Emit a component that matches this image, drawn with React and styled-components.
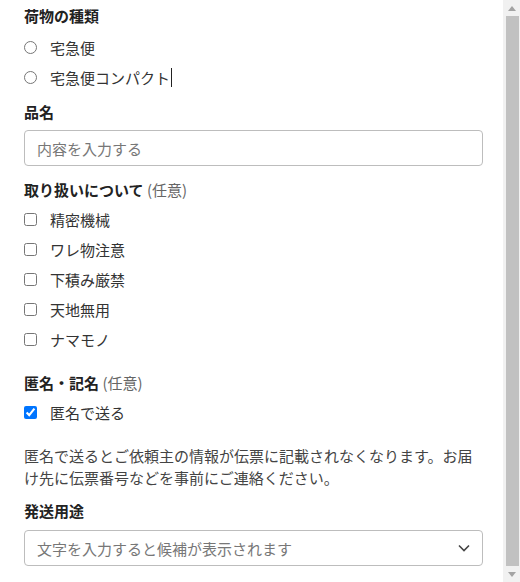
import React from "react";
import styled, { createGlobalStyle } from "styled-components";

const GlobalStyle = createGlobalStyle`
  html, body {
    margin: 0;
    padding: 0;
    background: #fff;
  }
  body {
    font-family: "Noto Sans CJK JP", "Noto Sans", sans-serif;
    color: #333;
  }
`;

const Page = styled.div`
  display: flex;
  height: 582px;
  overflow: hidden;
`;

const Form = styled.div`
  flex: 1;
  min-width: 0;
  padding: 5px 20px 0 24px;
`;

const Scrollbar = styled.div`
  flex: none;
  width: 17px;
  background: #f1f1f1;
  display: flex;
  flex-direction: column;
  align-items: center;
`;

const Arrow = styled.div`
  height: 16px;
  display: flex;
  align-items: center;
  justify-content: center;
`;

const Thumb = styled.div`
  flex: 1;
  width: 13px;
  margin-left: 1px;
  background: #c1c1c1;
`;

const Section = styled.div`
  margin-bottom: ${(p) => p.gap || 13}px;
`;

const Heading = styled.div`
  font-size: 15px;
  font-weight: bold;
  line-height: 22px;
  color: #222;
  margin-bottom: ${(p) => p.gap || 3}px;
`;

const Optional = styled.span`
  font-weight: normal;
  color: #666;
`;

const Option = styled.label`
  display: flex;
  align-items: center;
  height: 30px;
  font-size: 15px;
  color: #333;

  input {
    width: 13px;
    height: 13px;
    margin: 0 13px 0 0;
    flex: none;
  }
`;

const Caret = styled.span`
  display: inline-block;
  width: 1px;
  height: 19px;
  background: #222;
  margin-left: 1px;
`;

const Field = styled.div`
  position: relative;
  height: 36px;
  box-sizing: border-box;
  border: 1px solid #bdbdbd;
  border-radius: 4px;
  display: flex;
  align-items: center;
  padding: 0 12px;
  font-size: 15px;
  color: #777;
`;

const Chevron = styled.svg`
  position: absolute;
  right: 12px;
  top: 50%;
  margin-top: -4px;
`;

const Note = styled.p`
  margin: 0 0 11px;
  font-size: 15px;
  line-height: 22px;
  color: #444;
`;

export default function App() {
  return (
    <>
      <GlobalStyle />
      <Page>
        <Form>
          <Section gap={9}>
            <Heading gap={5}>荷物の種類</Heading>
            <Option>
              <input type="radio" name="kind" />
              宅急便
            </Option>
            <Option>
              <input type="radio" name="kind" />
              宅急便コンパクト
              <Caret />
            </Option>
          </Section>

          <Section gap={13}>
            <Heading gap={7}>品名</Heading>
            <Field>内容を入力する</Field>
          </Section>

          <Section gap={18}>
            <Heading>
              取り扱いについて <Optional>(任意)</Optional>
            </Heading>
            {["精密機械", "ワレ物注意", "下積み厳禁", "天地無用", "ナマモノ"].map(
              (item) => (
                <Option key={item}>
                  <input type="checkbox" />
                  {item}
                </Option>
              )
            )}
          </Section>

          <Section gap={18}>
            <Heading>
              匿名・記名 <Optional>(任意)</Optional>
            </Heading>
            <Option>
              <input type="checkbox" defaultChecked />
              匿名で送る
            </Option>
          </Section>

          <Note>
            匿名で送るとご依頼主の情報が伝票に記載されなくなります。お届け先に伝票番号などを事前にご連絡ください。
          </Note>

          <Section>
            <Heading gap={8}>発送用途</Heading>
            <Field>
              文字を入力すると候補が表示されます
              <Chevron width="12" height="8" viewBox="0 0 12 8">
                <path d="M1 1.5 L6 6.5 L11 1.5" fill="none" stroke="#444" strokeWidth="1.6" />
              </Chevron>
            </Field>
          </Section>
        </Form>

        <Scrollbar>
          <Arrow>
            <svg width="8" height="5" viewBox="0 0 8 5">
              <path d="M0 5 L4 0 L8 5 Z" fill="#a3a3a3" />
            </svg>
          </Arrow>
          <Thumb />
          <Arrow>
            <svg width="8" height="5" viewBox="0 0 8 5">
              <path d="M0 0 L4 5 L8 0 Z" fill="#a3a3a3" />
            </svg>
          </Arrow>
        </Scrollbar>
      </Page>
    </>
  );
}
